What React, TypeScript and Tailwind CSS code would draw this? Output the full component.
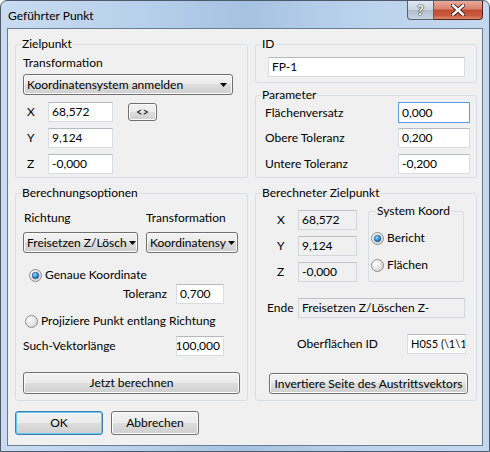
import React from "react";

const btnBg =
  "bg-[linear-gradient(to_bottom,#f2f2f2_0%,#ebebeb_50%,#dddddd_50%,#cfcfcf_100%)] shadow-[inset_0_0_0_1px_#fcfcfc]";

function Edit({
  value,
  className = "",
  focused = false,
}: {
  value: string;
  className?: string;
  focused?: boolean;
}) {
  return (
    <div
      className={`flex items-center h-[20px] border bg-white px-[3px] overflow-hidden whitespace-nowrap ${
        focused ? "border-[#569de5]" : "border-[#d9dde3] border-t-[#b5b9c1]"
      } ${className}`}
    >
      {value}
    </div>
  );
}

function ReadBox({ value, className = "" }: { value: string; className?: string }) {
  return (
    <div
      className={`flex items-center h-[20px] border border-[#d3d6da] border-t-[#bfc2c7] bg-[#f0f0f0] px-[3px] overflow-hidden whitespace-nowrap ${className}`}
    >
      {value}
    </div>
  );
}

function Combo({ value, className = "" }: { value: string; className?: string }) {
  return (
    <div
      className={`flex items-center justify-between gap-[2px] h-[21px] rounded-[3px] border border-[#707070] ${btnBg} pl-[3px] pr-[5px] ${className}`}
    >
      <span className="whitespace-nowrap">{value}</span>
      <svg width="7" height="4" className="shrink-0">
        <path d="M0 0h7L3.5 4z" fill="#000" />
      </svg>
    </div>
  );
}

function Button({
  label,
  className = "",
  isDefault = false,
}: {
  label: string;
  className?: string;
  isDefault?: boolean;
}) {
  return (
    <div
      className={`flex items-center justify-center whitespace-nowrap rounded-[3px] border ${
        isDefault
          ? "border-[#3c7fb1] bg-[linear-gradient(to_bottom,#f2f2f2_0%,#ebebeb_50%,#dddddd_50%,#cfcfcf_100%)] shadow-[inset_0_0_0_1px_#69c8f0]"
          : `border-[#707070] ${btnBg}`
      } ${className}`}
    >
      {label}
    </div>
  );
}

function Radio({ checked }: { checked: boolean }) {
  const id = checked ? "rc" : "ru";
  return (
    <svg width="13" height="13" className="shrink-0">
      <defs>
        <radialGradient id={`${id}-bg`} cx="0.35" cy="0.35" r="0.8">
          <stop offset="0" stopColor="#ffffff" />
          <stop offset="1" stopColor="#cfcfcf" />
        </radialGradient>
        <radialGradient id={`${id}-dot`} cx="0.4" cy="0.35" r="0.7">
          <stop offset="0" stopColor="#9ad8ff" />
          <stop offset="0.6" stopColor="#2e8ad8" />
          <stop offset="1" stopColor="#1a4f80" />
        </radialGradient>
      </defs>
      <circle cx="6.5" cy="6.5" r="6" fill={`url(#${id}-bg)`} stroke="#8e8f8f" />
      {checked && <circle cx="6.5" cy="6.5" r="3.3" fill={`url(#${id}-dot)`} stroke="#24507a" strokeWidth="0.6" />}
    </svg>
  );
}

function Group({
  title,
  className = "",
  children,
  legendLeft = "left-[5px]",
}: {
  title: string;
  className?: string;
  children?: React.ReactNode;
  legendLeft?: string;
}) {
  return (
    <div className={`relative border border-[#d5dfe5] rounded-[3px] ${className}`}>
      <span className={`absolute -top-[9px] ${legendLeft} px-[1px] bg-[#f0f0f0] leading-[16px] whitespace-nowrap`}>
        {title}
      </span>
      {children}
    </div>
  );
}

export default function App() {
  return (
    <div className="w-[490px] h-[452px] font-['Lato',sans-serif] text-[12px] leading-[16px] text-black">
      <div className="w-[490px] h-[452px] flex flex-col rounded-t-[7px] border border-[#4d5a6b] bg-[linear-gradient(to_right,#c9dcf1_0%,#b6cfea_30%,#a6c2e1_50%,#bcd3ec_75%,#c3d8ef_100%)] overflow-hidden">
        {/* title bar */}
        <div className="h-[27px] flex items-start justify-between pl-[7px] pr-[6px] shrink-0">
          <span className="mt-[7px] text-[12px] leading-[16px] text-black">Geführter Punkt</span>
          <div className="flex">
            <div className="w-[27px] h-[19px] flex items-center justify-center rounded-bl-[4px] border border-t-0 border-[#59626f] bg-[linear-gradient(to_bottom,#e1e9f2_0%,#c9d4e0_50%,#aebccc_50%,#c7d5e3_100%)] text-white font-bold text-[14px] leading-[14px] [text-shadow:0_0_1px_#333,0_0_1px_#333,0_0_2px_#444]">
              ?
            </div>
            <div className="w-[49px] h-[19px] flex items-center justify-center rounded-br-[4px] border border-t-0 border-l-0 border-[#57221a] bg-[linear-gradient(to_bottom,#e9a99c_0%,#d8826f_45%,#c04d33_50%,#c9593f_80%,#dc8a6c_100%)]">
              <svg width="14" height="12" viewBox="0 0 14 12">
                <path
                  d="M2 1.5L12 10.5M12 1.5L2 10.5"
                  stroke="#3a1a14"
                  strokeWidth="4.2"
                  strokeLinecap="square"
                />
                <path
                  d="M2 1.5L12 10.5M12 1.5L2 10.5"
                  stroke="#ffffff"
                  strokeWidth="2.4"
                  strokeLinecap="square"
                />
              </svg>
            </div>
          </div>
        </div>
        {/* client */}
        <div className="ml-[6px] w-[476px] h-[418px] border border-[#6b7d93] bg-[#f0f0f0] pl-[7px] pt-[15px] flex flex-col">
          <div className="flex gap-[7px]">
            {/* left column */}
            <div className="w-[233px] flex flex-col">
              <Group title="Zielpunkt" className="h-[134px] pl-[7px] pt-[10px]">
                <div>Transformation</div>
                <Combo value="Koordinatensystem anmelden" className="mt-[3px] w-[210px]" />
                <div className="flex items-center mt-[7px]">
                  <span className="w-[21px] ml-[4px]">X</span>
                  <Edit value="68,572" className="w-[65px]" />
                  <Button label="<>" className="ml-[15px] w-[29px] h-[18px] text-[11px]" />
                </div>
                <div className="flex items-center mt-[6px]">
                  <span className="w-[21px] ml-[4px]">Y</span>
                  <Edit value="9,124" className="w-[65px]" />
                </div>
                <div className="flex items-center mt-[6px]">
                  <span className="w-[21px] ml-[4px]">Z</span>
                  <Edit value="-0,000" className="w-[65px]" />
                </div>
              </Group>
              <Group title="Berechnungsoptionen" className="mt-[15px] h-[208px] pl-[7px] pr-[7px] pt-[16px]">
                <div className="flex">
                  <span className="w-[123px] pl-[1px]">Richtung</span>
                  <span>Transformation</span>
                </div>
                <div className="flex mt-[6px] gap-[8px]">
                  <Combo value="Freisetzen Z/Lösch" className="w-[115px]" />
                  <Combo value="Koordinatensy" className="w-[92px]" />
                </div>
                <div className="flex items-center gap-[3px] ml-[6px] mt-[14px] h-[16px]">
                  <Radio checked />
                  <span>Genaue Koordinate</span>
                </div>
                <div className="flex items-center mt-[1px]">
                  <span className="ml-[100px] w-[53px]">Toleranz</span>
                  <Edit value="0,700" className="w-[48px]" />
                </div>
                <div className="flex items-center gap-[3px] ml-[2px] mt-[9px] h-[16px]">
                  <Radio checked={false} />
                  <span>Projiziere Punkt entlang Richtung</span>
                </div>
                <div className="flex items-center mt-[7px]">
                  <span className="w-[153px]">Such-Vektorlänge</span>
                  <Edit value="100,000" className="w-[48px] justify-end" />
                </div>
                <Button label="Jetzt berechnen" className="mt-[16px] h-[22px] w-full" />
              </Group>
            </div>
            {/* right column */}
            <div className="w-[222px] flex flex-col">
              <Group title="ID" className="h-[39px] pl-[12px] pt-[12px]">
                <Edit value="FP-1" className="w-[197px]" />
              </Group>
              <Group title="Parameter" className="mt-[12px] h-[83px] pl-[9px] pt-[6px]">
                <div className="flex items-center">
                  <span className="w-[133px]">Flächenversatz</span>
                  <Edit value="0,000" focused className="w-[72px] h-[21px]" />
                </div>
                <div className="flex items-center mt-[5px]">
                  <span className="w-[133px]">Obere Toleranz</span>
                  <Edit value="0,200" className="w-[72px]" />
                </div>
                <div className="flex items-center mt-[6px]">
                  <span className="w-[133px]">Untere Toleranz</span>
                  <Edit value="-0,200" className="w-[72px]" />
                </div>
              </Group>
              <Group title="Berechneter Zielpunkt" className="mt-[15px] h-[208px] pl-[11px] pt-[16px]">
                <div className="flex">
                  <div className="flex flex-col gap-[6px]">
                    <div className="flex items-center">
                      <span className="w-[31px] pl-[10px]">X</span>
                      <ReadBox value="68,572" className="w-[59px]" />
                    </div>
                    <div className="flex items-center">
                      <span className="w-[31px] pl-[10px]">Y</span>
                      <ReadBox value="9,124" className="w-[59px]" />
                    </div>
                    <div className="flex items-center">
                      <span className="w-[31px] pl-[10px]">Z</span>
                      <ReadBox value="-0,000" className="w-[59px]" />
                    </div>
                  </div>
                  <Group
                    title="System Koord"
                    legendLeft="left-[7px]"
                    className="ml-[11px] mt-[1px] w-[96px] h-[71px] pl-[2px] pt-[18px]"
                  >
                    <div className="flex items-center gap-[3px] h-[16px]">
                      <Radio checked />
                      <span>Bericht</span>
                    </div>
                    <div className="flex items-center gap-[3px] h-[16px] mt-[11px]">
                      <Radio checked={false} />
                      <span>Flächen</span>
                    </div>
                  </Group>
                </div>
                <div className="flex items-center mt-[16px]">
                  <span className="w-[31px]">Ende</span>
                  <ReadBox value="Freisetzen Z/Löschen Z-" className="w-[167px]" />
                </div>
                <div className="flex items-center mt-[16px]">
                  <span className="ml-[30px] w-[110px]">Oberflächen ID</span>
                  <Edit value="H0S5 (\1\1" className="w-[59px] h-[19px] px-[2px] text-[11px]" />
                </div>
                <Button label="Invertiere Seite des Austrittsvektors" className="mt-[19px] ml-[2px] w-[199px] h-[21px]" />
              </Group>
            </div>
          </div>
          <div className="flex gap-[8px] mt-[10px]">
            <Button label="OK" isDefault className="w-[88px] h-[24px]" />
            <Button label="Abbrechen" className="w-[88px] h-[24px]" />
          </div>
        </div>
      </div>
    </div>
  );
}
